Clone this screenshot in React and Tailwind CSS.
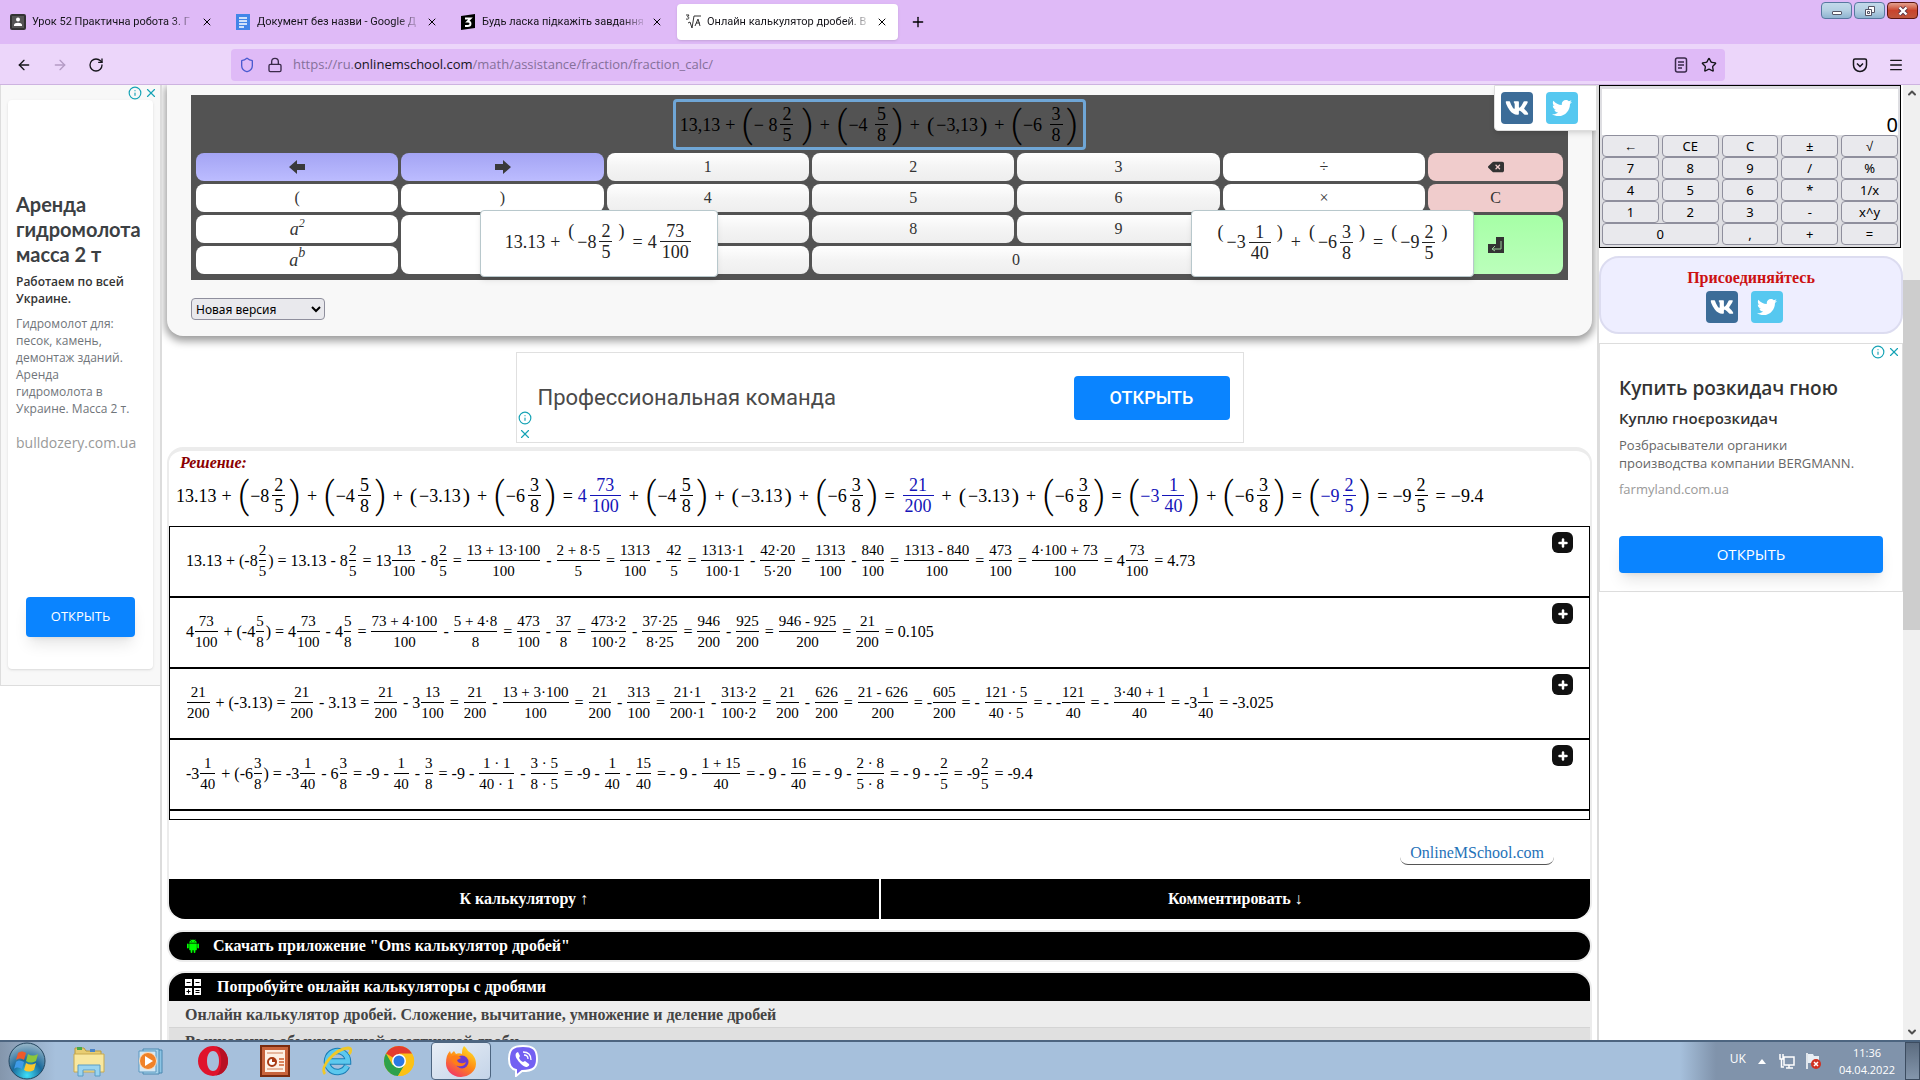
import React from "react";
import {
  ArrowLeft,
  ArrowRight,
  RotateCw,
  Shield,
  Lock,
  Star,
  Menu,
  Plus,
  X,
  Info,
  ChevronUp,
  ChevronDown,
} from "lucide-react";
import { FaTwitter, FaDeleteLeft } from "react-icons/fa6";
import { AiFillAndroid } from "react-icons/ai";
import { FaVk } from "react-icons/fa";

const tabs = [
  { title: "Урок 52 Практична робота 3. Г", icon: "class" },
  { title: "Документ без назви - Google Д", icon: "docs" },
  { title: "Будь ласка підкажіть завдання", icon: "znanija" },
  { title: "Онлайн калькулятор дробей. В", icon: "root", active: true },
];

// arrays are fractions, "(" and ")" are tall brackets, {blue: [...]} is a highlighted result
const solution = [
  "13.13", "+", "(", "−8", ["2", "5"], ")", "+", "(", "−4", ["5", "8"], ")", "+", "[", "−3.13", "]", "+",
  "(", "−6", ["3", "8"], ")", "=", { blue: ["4", ["73", "100"]] }, "+", "(", "−4", ["5", "8"], ")", "+",
  "[", "−3.13", "]", "+", "(", "−6", ["3", "8"], ")", "=", { blue: [["21", "200"]] }, "+", "[", "−3.13", "]",
  "+", "(", "−6", ["3", "8"], ")", "=", "(", { blue: ["−3", ["1", "40"]] }, ")", "+", "(", "−6", ["3", "8"],
  ")", "=", "(", { blue: ["−9", ["2", "5"]] }, ")", "=", "−9", ["2", "5"], "=", "−9.4",
];

const entered = [
  "13,13", "+", "(", "− 8", ["2", "5"], " ", ")", "+", "(", "−4 ", ["5", "8"], ")", "+", "[", "−3,13", "]",
  "+", "(", "−6 ", ["3", "8"], ")",
];

const hintLeft = ["13.13", "+", "^(", "−8", ["2", "5"], "^)", "=", "4", ["73", "100"]];
const hintRight = [
  "^(", "−3", ["1", "40"], "^)", "+", "^(", "−6", ["3", "8"], "^)", "=", "^(", "−9", ["2", "5"], "^)",
];

const steps = [
  [
    "13.13 + (-8", ["2", "5"], ") = 13.13 - 8", ["2", "5"], " = 13", ["13", "100"], " - 8", ["2", "5"], " = ",
    ["13 + 13·100", "100"], " - ", ["2 + 8·5", "5"], " = ", ["1313", "100"], " - ", ["42", "5"], " = ",
    ["1313·1", "100·1"], " - ", ["42·20", "5·20"], " = ", ["1313", "100"], " - ", ["840", "100"], " = ",
    ["1313 - 840", "100"], " = ", ["473", "100"], " = ", ["4·100 + 73", "100"], " = 4", ["73", "100"], " = 4.73",
  ],
  [
    "4", ["73", "100"], " + (-4", ["5", "8"], ") = 4", ["73", "100"], " - 4", ["5", "8"], " = ",
    ["73 + 4·100", "100"], " - ", ["5 + 4·8", "8"], " = ", ["473", "100"], " - ", ["37", "8"], " = ",
    ["473·2", "100·2"], " - ", ["37·25", "8·25"], " = ", ["946", "200"], " - ", ["925", "200"], " = ",
    ["946 - 925", "200"], " = ", ["21", "200"], " = 0.105",
  ],
  [
    ["21", "200"], " + (-3.13) = ", ["21", "200"], " - 3.13 = ", ["21", "200"], " - 3", ["13", "100"], " = ",
    ["21", "200"], " - ", ["13 + 3·100", "100"], " = ", ["21", "200"], " - ", ["313", "100"], " = ",
    ["21·1", "200·1"], " - ", ["313·2", "100·2"], " = ", ["21", "200"], " - ", ["626", "200"], " = ",
    ["21 - 626", "200"], " = -", ["605", "200"], " = - ", ["121 · 5", "40 · 5"], " = - -", ["121", "40"], " = - ",
    ["3·40 + 1", "40"], " = -3", ["1", "40"], " = -3.025",
  ],
  [
    "-3", ["1", "40"], " + (-6", ["3", "8"], ") = -3", ["1", "40"], " - 6", ["3", "8"], " = -9 - ", ["1", "40"],
    " - ", ["3", "8"], " = -9 - ", ["1 · 1", "40 · 1"], " - ", ["3 · 5", "8 · 5"], " = -9 - ", ["1", "40"], " - ",
    ["15", "40"], " = - 9 - ", ["1 + 15", "40"], " = - 9 - ", ["16", "40"], " = - 9 - ", ["2 · 8", "5 · 8"],
    " = - 9 - -", ["2", "5"], " = -9", ["2", "5"], " = -9.4",
  ],
];

const smallKeys = [
  "←", "CE", "C", "±", "√", "7", "8", "9", "/", "%", "4", "5", "6", "*", "1/x", "1", "2", "3", "-", "x^y", "0", ",", "+", "=",
];

const Formula = ({ items }) => {
  return (
    <span className="inline-flex items-center whitespace-pre text-lg leading-5">
      {items.map((item, i) => {
        if (Array.isArray(item)) {
          return (
            <span key={i} className="mx-[3px] inline-flex flex-col text-center">
              <span className="border-b border-current px-0.5">{item[0]}</span>
              <span className="px-0.5">{item[1]}</span>
            </span>
          );
        }
        if (item.blue) {
          return (
            <span key={i} className="text-[#1414b8]">
              <Formula items={item.blue} />
            </span>
          );
        }
        if (item === "(" || item === ")") {
          return (
            <span key={i} className="mx-px font-['Roboto',sans-serif] text-4xl font-light leading-10">
              {item}
            </span>
          );
        }
        if (item === "[" || item === "]") {
          return (
            <span key={i} className="mx-0.5 text-[22px]">
              {item === "[" ? "(" : ")"}
            </span>
          );
        }
        if (item[0] === "^") {
          return (
            <span key={i} className="mx-[3px] self-start">
              {item[1]}
            </span>
          );
        }
        if (item === "+" || item === "=") {
          return (
            <span key={i} className="mx-[5px]">
              {item}
            </span>
          );
        }
        return <span key={i}>{item}</span>;
      })}
    </span>
  );
};

const Step = ({ items }) => {
  return (
    <div className="flex h-[71px] justify-between border-b-2 border-black pl-4 pr-4">
      <div className="flex items-center whitespace-pre pb-0.5 text-base leading-5">
        {items.map((item, i) =>
          Array.isArray(item) ? (
            <span key={i} className="ml-px mr-0.5 inline-flex flex-col text-center text-[15px]">
              <span className="border-b border-black">{item[0]}</span>
              <span>{item[1]}</span>
            </span>
          ) : (
            <span key={i}>{item}</span>
          )
        )}
      </div>
      <button
        aria-label="Подробнее"
        className="mt-[5px] flex size-[21px] items-center justify-center rounded-md bg-[#111] text-white"
      >
        <Plus className="size-3" strokeWidth={5} />
      </button>
    </div>
  );
};

const TabIcon = ({ name }) => {
  if (name === "docs") {
    return (
      <svg viewBox="0 0 16 16" className="size-4 shrink-0">
        <path d="M1 0h14v16H1z" fill="#4285e8" />
        <path d="M4 4h8M4 7h8M4 10h8M4 13h5" stroke="#fff" strokeWidth="1.4" />
      </svg>
    );
  }
  if (name === "znanija") {
    return (
      <svg viewBox="0 0 16 16" className="size-4 shrink-0">
        <path d="M1 2 15 0v14L1 16z" fill="#000" />
        <path d="M5 4.500h5.500L7.500 7.500c4 0 4 4.500 0 4.500H5" fill="none" stroke="#fff" strokeWidth="1.900" />
      </svg>
    );
  }
  if (name === "root") {
    return (
      <svg viewBox="0 0 16 16" className="size-4 shrink-0" fill="none" stroke="#333" strokeWidth="1">
        <path d="M1 1h3L2.500 3C5 3 4 6 1 5M3 9l2-1 2 6 2-12h7M10 12l3-7 2 7M11 9h4" />
      </svg>
    );
  }
  return (
    <svg viewBox="0 0 16 16" className="size-4 shrink-0">
      <rect width="16" height="16" rx="2" fill="#333" />
      <rect x="2" y="2" width="12" height="12" fill="#555" />
      <circle cx="8" cy="5.500" r="2" fill="#fff" />
      <path d="M4 11c0-3 8-3 8 0v1H4z" fill="#fff" />
    </svg>
  );
};

const BrowserHeader = () => {
  return (
    <header className="shrink-0 border-b border-[#cdb3e0] bg-[#ecd6fa] font-['Open_Sans','Noto_Sans',sans-serif]">
      <div className="flex h-11 items-start justify-between bg-[#dfbaf7]">
        <div className="flex items-center gap-1 pl-0.5 pt-1">
          {tabs.map((tab) => (
            <div
              key={tab.icon}
              className={
                (tab.active ? "bg-white shadow " : "") + "flex h-9 w-[221px] items-center gap-1 rounded pl-2 pr-2.5"
              }
            >
              <TabIcon name={tab.icon} />
              <p className="min-w-0 flex-1 whitespace-nowrap pl-0.5 font-['Roboto',sans-serif] text-[11px] text-[#15141a] [mask-image:linear-gradient(to_right,black_85%,transparent)]">
                {tab.title}
              </p>
              <button aria-label="Закрити вкладку">
                <X className="size-3" strokeWidth={2} />
              </button>
            </div>
          ))}
          <button aria-label="Нова вкладка" className="ml-2">
            <Plus className="size-4" strokeWidth={2} />
          </button>
        </div>
        <div className="flex gap-0.5 pr-0.5 pt-0.5">
          <button
            aria-label="Згорнути"
            className="flex h-[17px] w-[31px] items-center justify-center rounded-sm border border-[#5878a0] bg-linear-to-b from-[#c3daea] via-[#b4cfe2] to-[#8fb4d0]"
          >
            <span className="mt-1 h-1 w-2.5 rounded-[1px] border border-[#556] bg-white" />
          </button>
          <button
            aria-label="Відновити"
            className="flex h-[17px] w-[31px] items-center justify-center rounded-sm border border-[#5878a0] bg-linear-to-b from-[#c3daea] via-[#b4cfe2] to-[#8fb4d0]"
          >
            <svg viewBox="0 0 12 12" className="size-3" fill="#fff" stroke="#556" strokeWidth="1">
              <path d="M4.500 1.500h6v6h-6z" />
              <path d="M1.500 4.500h6v6h-6z" />
              <path d="M3.500 6.500h2v2h-2z" />
            </svg>
          </button>
          <button
            aria-label="Закрити"
            className="flex h-[17px] w-[31px] items-center justify-center rounded-sm border border-[#5b1410] bg-linear-to-b from-[#e2a08f] via-[#c9432c] to-[#c0563c]"
          >
            <svg viewBox="0 0 12 12" className="size-3">
              <path d="m2.500 2.500 7 7m0-7-7 7" stroke="#534" strokeWidth="4" />
              <path d="m2.500 2.500 7 7m0-7-7 7" stroke="#fff" strokeWidth="2.400" />
            </svg>
          </button>
        </div>
      </div>
      <div className="flex h-10 items-center pl-4 pr-4 pt-0.5 text-[#15141a]">
        <nav className="flex w-[215px] gap-5">
          <button aria-label="Назад">
            <ArrowLeft className="size-4" strokeWidth={2} />
          </button>
          <button aria-label="Вперед" className="text-[#b49bc4]">
            <ArrowRight className="size-4" strokeWidth={2} />
          </button>
          <button aria-label="Оновити">
            <RotateCw className="size-4" strokeWidth={2} />
          </button>
        </nav>
        <div className="flex h-8 flex-1 items-center gap-3 rounded bg-[#dfbaf7] px-2">
          <Shield className="size-4 text-[#4a5ad0]" strokeWidth={2} />
          <Lock className="size-4 text-[#3a2a4a]" strokeWidth={2} />
          <p className="-ml-0.5 flex-1 text-[13px] text-[#85709a]">
            https://ru.<span className="text-[#15141a]">onlinemschool.com</span>/math/assistance/fraction/fraction_calc/
          </p>
          <button aria-label="Режим читання">
            <svg viewBox="0 0 16 16" className="size-4" fill="none" stroke="#3a2a4a" strokeWidth="1.500">
              <rect x="2.500" y="1" width="11" height="14" rx="2" />
              <path d="M5 5h6M5 8h6M5 11h4" />
            </svg>
          </button>
          <button aria-label="Закладка">
            <Star className="size-4" strokeWidth={2} />
          </button>
        </div>
        <div className="ml-[127px] flex items-center gap-5">
          <button aria-label="Pocket">
            <svg viewBox="0 0 16 16" className="size-4" fill="none" stroke="#15141a" strokeWidth="1.500">
              <path d="M3 2h10a1.500 1.500 0 0 1 1.500 1.500V8a6.500 6.500 0 0 1-13 0V3.500A1.500 1.500 0 0 1 3 2z" />
              <path d="m5 6.500 3 3 3-3" />
            </svg>
          </button>
          <button aria-label="Меню">
            <Menu className="size-4" strokeWidth={2} />
          </button>
        </div>
      </div>
    </header>
  );
};

const SocialLinks = () => {
  return (
    <div className="flex justify-center gap-[13px]">
      <a href="#vk" aria-label="VK" className="flex size-8 items-center justify-center rounded bg-[#3c6c98] text-white">
        <FaVk className="size-6" />
      </a>
      <a
        href="#twitter"
        aria-label="Twitter"
        className="flex size-8 items-center justify-center rounded bg-[#56c8f0] text-white"
      >
        <FaTwitter className="size-5" />
      </a>
    </div>
  );
};

const AdMarks = ({ className }) => {
  return (
    <div className={"flex text-[#16a3b5] " + className}>
      <Info className="size-3.5" strokeWidth={2} />
      <X className="size-3.5" strokeWidth={2} />
    </div>
  );
};

const LeftAd = () => {
  return (
    <aside className="w-[162px] shrink-0 border-r-2 border-[#dcdcdc] font-['Open_Sans',sans-serif]">
      <div className="border-b border-l border-[#ddd] bg-[#f8f8f8] pb-4">
        <AdMarks className="h-[15px] items-center justify-end gap-0.5 pr-0.5" />
        <div className="mx-[7px] flex flex-col rounded bg-white px-2 pb-8 pt-[92px] shadow">
          <h2 className="font-['Lato',sans-serif] text-xl font-bold leading-[25px] text-[#3c4043]">
            Аренда гидромолота масса 2 т
          </h2>
          <p className="mt-1.5 text-xs font-semibold leading-[17px] text-[#333]">Работаем по всей Украине.</p>
          <p className="mt-2 pr-2 text-xs leading-[17px] text-[#70757a]">
            Гидромолот для: песок, камень, демонтаж зданий. Аренда гидромолота в Украине. Масса 2 т.
          </p>
          <a href="#ad" className="mt-4 text-sm text-[#999]">
            bulldozery.com.ua
          </a>
          <button className="mx-2.5 mt-36 h-10 rounded bg-[#0a84ff] text-[13px] text-white shadow-lg">ОТКРЫТЬ</button>
        </div>
      </div>
    </aside>
  );
};

const white = "bg-white";
const digit = "bg-linear-to-b from-white via-[#f4f4f4] to-[#eee]";
const blue = "bg-linear-to-b from-[#a4a4f4] to-[#bcbcff]";
const red = "bg-[#f0cccc]";

const Key = ({ tone, className = "", label, children }) => {
  return (
    <button
      aria-label={label}
      className={"flex items-center justify-center rounded-lg text-base text-[#333] " + tone + " " + className}
    >
      {children}
    </button>
  );
};

const BlockArrow = ({ className = "" }) => (
  <svg viewBox="0 0 16 16" className={"size-4 " + className} fill="#3a3a3a">
    <path d="M0 8 8 1v4h8v6H8v4z" />
  </svg>
);

const Hint = ({ className, items }) => {
  return (
    <div
      className={
        "absolute top-[115px] flex h-[67px] items-center justify-center rounded-sm border border-[#b8c8cc] bg-white text-[#222] shadow-md " +
        className
      }
    >
      <div className="pb-1">
        <Formula items={items} />
      </div>
    </div>
  );
};

const Calculator = () => {
  return (
    <section className="rounded-b-2xl bg-[#f8f8f8] px-6 pb-4 pt-2.5 shadow-[0_3px_8px_2px_rgba(0,0,0,0.4)]">
      <div className="relative bg-[#535353] px-[5px] pb-1.5 pt-1">
        <div className="flex justify-center">
          <div
            role="textbox"
            className="flex h-[51px] items-center rounded-sm border-[3px] border-[#6fa6d6] px-1 text-black"
          >
            <Formula items={entered} />
          </div>
        </div>
        <div className="mt-[3px] grid grid-cols-[repeat(6,3fr)_2fr] grid-rows-[repeat(4,28px)] gap-[3px]">
          <Key tone={blue} label="Влево">
            <BlockArrow />
          </Key>
          <Key tone={blue} label="Вправо">
            <BlockArrow className="rotate-180" />
          </Key>
          <Key tone={digit}>1</Key>
          <Key tone={digit}>2</Key>
          <Key tone={digit}>3</Key>
          <Key tone={white}>÷</Key>
          <Key tone={red} label="Удалить">
            <FaDeleteLeft className="size-4" />
          </Key>
          <Key tone={white}>(</Key>
          <Key tone={white}>)</Key>
          <Key tone={digit}>4</Key>
          <Key tone={digit}>5</Key>
          <Key tone={digit}>6</Key>
          <Key tone={white}>×</Key>
          <Key tone={red}>C</Key>
          <Key tone={white} className="text-lg italic">
            a<sup className="text-xs">2</sup>
          </Key>
          <Key tone={white} className="row-span-2" label="Дробь" />
          <Key tone={digit} label="7" />
          <Key tone={digit}>8</Key>
          <Key tone={digit}>9</Key>
          <Key tone={white} label="Минус" />
          <Key tone="bg-linear-to-b from-[#a6ffa6] to-[#bbffbb]" className="row-span-2" label="Вычислить">
            <svg viewBox="0 0 16 16" className="size-4">
              <path d="M8 0h8v16H0V7h8z" fill="#333" />
              <path d="M13 4v8H4M7 9l-3 3 3 2" fill="none" stroke="#9c9" strokeWidth="1" />
            </svg>
          </Key>
          <Key tone={white} className="text-lg italic">
            a<sup className="text-sm">b</sup>
          </Key>
          <Key tone={digit} label="Запятая" />
          <Key tone={digit} className="col-span-2">
            0
          </Key>
          <Key tone={white} label="Плюс" />
        </div>
        <Hint className="left-[21%] w-[238px]" items={hintLeft} />
        <Hint className="right-[94px] w-[283px]" items={hintRight} />
      </div>
      <select
        aria-label="Версия"
        className="mt-[18px] block h-[22px] w-[134px] rounded border border-[#8f8f9d] bg-[#e9e9ed] font-['Noto_Sans',sans-serif] text-xs text-black"
      >
        <option>Новая версия</option>
      </select>
    </section>
  );
};

const CenterAd = () => {
  return (
    <section className="mx-auto mt-4 flex h-[91px] w-[728px] items-center justify-between border border-[#e0e0e0] pl-px pr-[13px] font-['Roboto',sans-serif]">
      <div className="flex items-center gap-1.5">
        <AdMarks className="flex-col gap-0.5 self-end pt-[57px]" />
        <p className="text-[22px] text-[#4a4a4a]">Профессиональная команда</p>
      </div>
      <button className="h-11 w-[156px] rounded-sm bg-[#0a84ff] text-lg font-medium text-white">ОТКРЫТЬ</button>
    </section>
  );
};

const Main = () => {
  return (
    <main className="relative min-w-0 flex-1 overflow-hidden px-[5px] font-['Liberation_Serif',serif]">
      <Calculator />
      <div className="absolute right-0 top-0 rounded-bl border border-[#ddd] bg-white py-1.5 pl-1.5 pr-[18px] shadow-md">
        <SocialLinks />
      </div>
      <CenterAd />
      <section className="mt-1 rounded-2xl border-x-2 border-t-4 border-[#ececec]">
        <h1 className="mt-0.5 pl-[11px] text-base font-bold italic leading-5 text-[#8b0000]">Решение:</h1>
        <div className="flex h-[53px] items-center whitespace-nowrap pb-2 pl-[7px] text-black">
          <Formula items={solution} />
        </div>
        <div className="border border-black pb-2 text-black">
          {steps.map((items, i) => (
            <Step key={i} items={items} />
          ))}
        </div>
        <div className="flex justify-end pb-3.5 pr-9 pt-[22px]">
          <a href="#oms" className="rounded-b-lg border-b border-[#555] px-2.5 leading-[22px] text-[#1f72b8]">
            OnlineMSchool.com
          </a>
        </div>
        <div className="flex h-10 gap-0.5 overflow-hidden rounded-b-2xl font-bold text-white">
          <button className="flex-1 bg-black">К калькулятору ↑</button>
          <button className="flex-1 bg-black">Комментировать ↓</button>
        </div>
      </section>
      <a
        href="#app"
        className="mx-0.5 mt-[13px] flex h-7 items-center gap-3 rounded-2xl bg-black pl-4 font-bold text-white ring-2 ring-[#ececec]"
      >
        <AiFillAndroid className="size-4 text-[#0f0]" />
        Скачать приложение "Oms калькулятор дробей"
      </a>
      <section className="mx-0.5 mt-[13px] overflow-hidden rounded-t-2xl font-bold ring-2 ring-[#ececec]">
        <h2 className="flex h-7 items-center gap-4 bg-black pl-4 text-white">
          <svg viewBox="0 0 16 16" className="size-4">
            <path d="M0 0h7v7H0zM9 0h7v7H9zM0 9h7v7H0zM9 9h7v7H9z" fill="#fff" />
            <path d="M1.500 3.500h4M10.500 3.500h4M1.500 12.500h4M3.500 10.500v4M10.500 11.500h4M10.500 13.500h4" stroke="#000" />
          </svg>
          Попробуйте онлайн калькуляторы с дробями
        </h2>
        <a
          href="#fractions"
          className="block h-[27px] border-b border-[#d4d4d4] bg-[#ededed] pl-4 leading-7 text-[#444]"
        >
          Онлайн калькулятор дробей. Сложение, вычитание, умножение и деление дробей
        </a>
        <a href="#decimal" className="block h-[27px] bg-[#e0e0e0] pl-4 leading-7 text-[#444]">
          Вычисление обыкновенной десятичной дроби
        </a>
      </section>
    </main>
  );
};

const RightBar = () => {
  return (
    <aside className="flex w-[306px] shrink-0 flex-col border-l-2 border-[#dcdcdc]">
      <div className="mr-0.5 border border-black bg-[#dedee2] px-0.5 pb-0.5 pt-[3px] font-['Noto_Sans',sans-serif]">
        <input
          aria-label="Результат"
          readOnly
          value="0"
          className="block h-[46px] w-full bg-white pt-6 text-right text-xl leading-5 text-black outline-none"
        />
        <div className="grid grid-cols-5 gap-x-[3px]">
          {smallKeys.map((key, i) => (
            <button
              key={i}
              className={
                "h-[22px] rounded border border-[#8f8f9d] bg-[#e9e9ed] text-[13px] leading-5 text-black " +
                (i === 20 ? "col-span-2" : "")
              }
            >
              {key}
            </button>
          ))}
        </div>
      </div>
      <section className="mt-2 h-[78px] rounded-[20px] border-2 border-[#dcdcf0] bg-[#eeeeff] pt-[9px] text-center font-['Liberation_Serif',serif]">
        <h3 className="mb-0.5 font-bold leading-[22px] text-[#cc1111]">Присоединяйтесь</h3>
        <div className="pr-3.5">
          <SocialLinks />
        </div>
      </section>
      <section className="mt-[9px] border border-[#ddd] pb-[18px] font-['Open_Sans',sans-serif]">
        <AdMarks className="h-4 items-center justify-end gap-0.5 pr-px" />
        <div className="flex flex-col px-[19px]">
          <h2 className="mt-4 text-[19px] font-semibold leading-6 text-[#333]">Купить розкидач гною</h2>
          <h3 className="mt-2 text-[15px] font-semibold leading-5 text-[#333]">Куплю гноєрозкидач</h3>
          <p className="mt-2 pr-4 text-[13px] leading-[18px] text-[#666]">
            Розбрасыватели органики производства компании BERGMANN.
          </p>
          <a href="#ad" className="mt-2 text-[13px] text-[#999]">
            farmyland.com.ua
          </a>
          <button className="mt-9 h-[37px] rounded-sm bg-[#0a84ff] text-[15px] text-white shadow-lg">ОТКРЫТЬ</button>
        </div>
      </section>
    </aside>
  );
};

const ScrollBar = () => {
  return (
    <div className="flex w-[17px] shrink-0 flex-col items-center bg-[#f0f0f0] py-0.5 text-[#505050]">
      <ChevronUp className="size-3" strokeWidth={4} />
      <div className="mt-[181px] h-[350px] w-full bg-[#cdcdcd]" />
      <ChevronDown className="mt-auto size-3" strokeWidth={4} />
    </div>
  );
};

const WindowsLogo = () => (
  <svg viewBox="0 0 40 40" className="size-10">
    <defs>
      <radialGradient id="orb" cx="50%" cy="90%" r="85%">
        <stop offset="0" stopColor="#3fe0f8" />
        <stop offset="0.5" stopColor="#1a6a9c" />
        <stop offset="1" stopColor="#8fb0c4" />
      </radialGradient>
    </defs>
    <circle cx="20" cy="20" r="18" fill="url(#orb)" stroke="#24465f" />
    <path d="M11 12c3-2 5-2 8 0l-2 7c-3-2-5-2-8 0z" fill="#ee5a2b" />
    <path d="M21 13c3 2 6 2 10 0l-2 7c-4 2-7 2-10 0z" fill="#8cc63c" />
    <path d="M9 21c2-2 5-2 8 0l-2 7c-3-2-6-2-8 0z" fill="#3f9be8" />
    <path d="M19 22c3 2 6 2 10 0l-2 7c-4 2-7 2-10 0z" fill="#fbc72e" />
  </svg>
);

const Explorer = () => (
  <svg viewBox="0 0 34 32" className="h-8 w-[34px]">
    <path d="M3 3h9l2 3h15v20H3z" fill="#e8cd72" stroke="#b89a3e" />
    <path d="M5 2h5v3H5z" fill="#4aa84a" />
    <path d="M18 4h5v3h-5z" fill="#4b84c8" />
    <path d="M2 9h30v18H2z" fill="#f8e7a0" stroke="#c8a94e" />
    <path d="M6 31V20h22v11h-5v-6H11v6z" fill="#9ad4f0" stroke="#5a9cc4" />
  </svg>
);

const Player = () => (
  <svg viewBox="0 0 32 32" className="size-8">
    <path d="M11 5h16v23H11z" fill="#8cc4e4" stroke="#4a88b0" />
    <path d="M8 4h16v25H8z" fill="#a8d4ec" stroke="#4a88b0" />
    <path d="M4 6h17v21H4z" fill="#d4e8f4" stroke="#5a98c0" />
    <circle cx="13" cy="16" r="8.500" fill="#f08228" stroke="#fbe0c4" />
    <path d="m10 11 8 5-8 5z" fill="#fff" />
  </svg>
);

const Opera = () => (
  <svg viewBox="0 0 32 32" className="size-8">
    <path d="M16 1a15 15 0 1 0 0 30 15 15 0 0 0 0-30zm0 5c4 0 6 4.500 6 10s-2 10-6 10-6-4.500-6-10 2-10 6-10z" fill="#e0142c" />
    <path d="M19 1.500c8 1 12 8 12 14.500s-4 13.500-12 14.500c7-4 7-25 0-29z" fill="#b81024" />
  </svg>
);

const PowerPoint = () => (
  <svg viewBox="0 0 32 32" className="size-8">
    <rect x="2" y="1" width="28" height="30" fill="#c8643c" stroke="#7a2c10" strokeWidth="2" />
    <rect x="6" y="5" width="20" height="22" fill="#fdf0e4" />
    <path d="M8 8h16M8 24h16" stroke="#d08058" />
    <circle cx="13" cy="17" r="4" fill="#fff" stroke="#a83c14" strokeWidth="2" />
    <path d="M13 17v-4.500a4.500 4.500 0 0 1 4.500 4.500z" fill="#a83c14" />
    <path d="M20 14h5M20 17h5M20 20h5" stroke="#d06030" strokeWidth="1.500" />
  </svg>
);

const InternetExplorer = () => (
  <svg viewBox="0 0 32 32" className="size-8" fill="none">
    <path d="M26 21a10.500 10.500 0 1 1 1-4.500H8" stroke="#1a7cb4" strokeWidth="6.500" />
    <path d="M26 21a10.500 10.500 0 1 1 1-4.500H8" stroke="#5cc8ee" strokeWidth="4.500" />
    <path d="M4 29C-2 22 14 4 27 3c4 0 3 4 1 6" stroke="#f0c828" strokeWidth="2.800" />
  </svg>
);

const Chrome = () => (
  <svg viewBox="0 0 32 32" className="size-8">
    <circle cx="16" cy="16" r="15" fill="#fbc116" />
    <path d="M16 16 3 8.500A15 15 0 0 1 29 8.500H16z" fill="#e33b2e" />
    <path d="M16 16 9.500 20 3 8.500A15 15 0 0 0 15 31l7.500-12z" fill="#2da14c" />
    <path d="M16 9h13.300A15 15 0 0 1 15 31l7-12z" fill="#fbc116" />
    <circle cx="16" cy="16" r="7" fill="#fff" />
    <circle cx="16" cy="16" r="5.500" fill="#2a78e4" />
  </svg>
);

const Firefox = () => (
  <svg viewBox="0 0 32 32" className="size-8">
    <defs>
      <linearGradient id="fox" x1="0.8" y1="0" x2="0.2" y2="1">
        <stop offset="0" stopColor="#ffe226" />
        <stop offset="0.5" stopColor="#ff8a16" />
        <stop offset="1" stopColor="#f0306c" />
      </linearGradient>
    </defs>
    <path d="M19 1c2 2 3 3 4 5 5 3 8 7 8 13a14.500 13 0 0 1-30-1c0-5 1-9 4-12l1 3 3-3 2 3c2-1 4-1 6 0 0-3 0-5 2-8z" fill="url(#fox)" />
    <circle cx="17" cy="17" r="6.500" fill="#6a3ad0" />
    <path d="M6 12c4-3 8-2 10 1l-4 2c1 4 6 4 9 2-1 6-13 7-15-5z" fill="#ff7e18" />
  </svg>
);

const Viber = () => (
  <svg viewBox="0 0 32 32" className="size-8">
    <path d="M16 1C6 1 2 4 2 14c0 6 2 10 7 11v6l6-5c11 0 15-3 15-12C30 4 26 1 16 1z" fill="#7360f2" stroke="#fff" strokeWidth="2" />
    <path d="M11 7c-3 1-3 4-1 7s5 7 9 8c2 0 4-2 3-3l-4-3-2 1c-2-1-3-2-4-4l1-2z" fill="#fff" />
    <path d="M16 7c5 0 8 3 8 8M17 10c3 0 4 2 4 4" fill="none" stroke="#fff" strokeWidth="1.300" />
  </svg>
);

const apps = [
  { name: "Провідник", Icon: Explorer },
  { name: "Програвач", Icon: Player },
  { name: "Opera", Icon: Opera },
  { name: "PowerPoint", Icon: PowerPoint },
  { name: "Internet Explorer", Icon: InternetExplorer },
  { name: "Chrome", Icon: Chrome },
  { name: "Firefox", Icon: Firefox, active: true },
  { name: "Viber", Icon: Viber },
];

const TaskBar = () => {
  return (
    <footer className="flex h-10 shrink-0 items-stretch justify-between border-t-2 border-[#4d6580] bg-[#a6c0dc] font-['Open_Sans',sans-serif] text-xs text-white">
      <div className="flex items-center bg-linear-to-r from-[#8496ac] to-[#a6c0dc] to-10% pl-[7px]">
        <button aria-label="Пуск" className="mr-[11px]">
          <WindowsLogo />
        </button>
        {apps.map(({ name, Icon, active }) => (
          <button
            key={name}
            aria-label={name}
            className={
              (active ? "rounded-sm border border-[#4d6580] bg-linear-to-br from-[#e8eef6] to-[#c4d4e8] " : "") +
              "mx-px flex h-[38px] w-[60px] items-center justify-center"
            }
          >
            <Icon />
          </button>
        ))}
      </div>
      <div className="flex items-center bg-linear-to-r from-[#a6c0dc] to-[#8093ab] to-15% pl-[50px]">
        <span className="mr-3 pb-1">UK</span>
        <svg viewBox="0 0 8 5" className="mr-[13px] h-[5px] w-2">
          <path d="m4 0 4 5H0z" fill="#fff" />
        </svg>
        <svg viewBox="0 0 16 16" className="mr-2.5 size-4" fill="none" stroke="#fff" strokeWidth="1.500">
          <path d="M5 4h10v8H5zM10 12v3M7 15h7M1 1v5h3V1M2.500 6v8H5" />
        </svg>
        <svg viewBox="0 0 16 16" className="mr-[18px] size-4">
          <path d="M2 0v16" stroke="#fff" strokeWidth="1.500" />
          <path d="M3 1h5l1 2h5v7H3z" fill="#e8eef4" />
          <circle cx="11" cy="11" r="5" fill="#d03020" />
          <path d="m9 9 4 4m0-4-4 4" stroke="#fff" strokeWidth="1.500" />
        </svg>
        <p className="mr-2.5 text-center text-[11px] leading-[17px]">
          11:36
          <br />
          04.04.2022
        </p>
        <button aria-label="Робочий стіл" className="h-full w-[15px] border border-[#3c4c60] bg-linear-to-b from-[#5c6c80] to-[#8496ac]" />
      </div>
    </footer>
  );
};

const App = () => {
  return (
    <div className="flex h-screen flex-col overflow-hidden bg-white">
      <BrowserHeader />
      <div className="flex min-h-0 flex-1 overflow-hidden">
        <LeftAd />
        <Main />
        <RightBar />
        <ScrollBar />
      </div>
      <TaskBar />
    </div>
  );
};

export default App;
